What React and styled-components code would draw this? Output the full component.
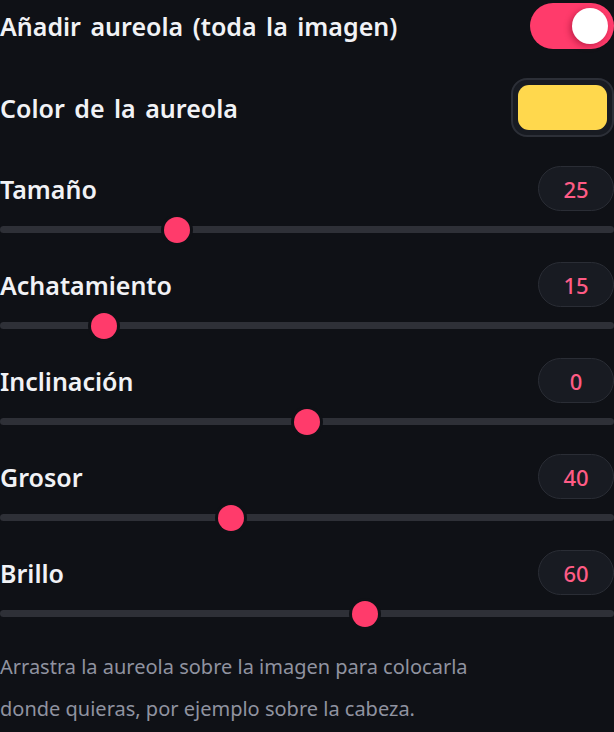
import React from 'react';
import styled, { createGlobalStyle } from 'styled-components';

const GlobalStyle = createGlobalStyle`
  html, body { margin: 0; padding: 0; background: #0f1116; }
  body { font-family: "Noto Sans", "Open Sans", sans-serif; }
`;

const Panel = styled.div`
  width: 614px;
  padding-top: 3px;
  display: flex;
  flex-direction: column;
  gap: 29px;
  color: #f1f2f5;
`;

const Row = styled.div`
  display: flex;
  align-items: center;
  justify-content: space-between;
`;

const Label = styled.span`
  font-size: 25px;
  font-weight: 600;
  word-spacing: 3px;
  line-height: 1.2;
`;

const Toggle = styled.div`
  width: 84px;
  height: 46px;
  border-radius: 23px;
  background: #ff3b6b;
  display: flex;
  align-items: center;
  justify-content: ${p => (p.$on ? 'flex-end' : 'flex-start')};
  padding: 0 6px;
  box-sizing: border-box;
`;

const Knob = styled.div`
  width: 36px;
  height: 36px;
  border-radius: 50%;
  background: #fff;
  box-shadow: -2px 2px 6px rgba(120, 0, 30, 0.45);
`;

const Swatch = styled.div`
  width: 103px;
  height: 59px;
  box-sizing: border-box;
  border: 2px solid #2c2f37;
  border-radius: 16px;
  background: #181b22;
  padding: 5px;
`;

const SwatchFill = styled.div`
  height: 100%;
  border-radius: 11px;
  background: ${p => p.$color};
`;

const Group = styled.div`
  display: flex;
  flex-direction: column;
  gap: 15px;
`;

const Pill = styled.div`
  min-width: 76px;
  height: 45px;
  box-sizing: border-box;
  border: 1.5px solid #2a2d35;
  border-radius: 23px;
  background: #181b22;
  color: #ff5b85;
  font-size: 22px;
  font-weight: 500;
  display: flex;
  align-items: center;
  justify-content: center;
`;

const Track = styled.div`
  position: relative;
  height: 7px;
  border-radius: 4px;
  background: #2e3037;
`;

const Thumb = styled.div`
  position: absolute;
  top: 50%;
  width: 26px;
  height: 26px;
  margin-left: -13px;
  margin-top: -13px;
  border-radius: 50%;
  background: #ff3b6b;
  box-shadow: 0 0 0 3px #0f1116;
`;

const Hint = styled.p`
  margin: 0;
  max-width: 520px;
  font-size: 20px;
  line-height: 42px;
  color: #9093a0;
`;

const sliders = [
  { label: 'Tamaño', value: 25, x: 177 },
  { label: 'Achatamiento', value: 15, x: 104 },
  { label: 'Inclinación', value: 0, x: 307 },
  { label: 'Grosor', value: 40, x: 231 },
  { label: 'Brillo', value: 60, x: 365 },
];

export default function App() {
  return (
    <>
      <GlobalStyle />
      <Panel>
        <Row>
          <Label>Añadir aureola (toda la imagen)</Label>
          <Toggle $on>
            <Knob />
          </Toggle>
        </Row>
        <Row>
          <Label>Color de la aureola</Label>
          <Swatch>
            <SwatchFill $color="#ffd84d" />
          </Swatch>
        </Row>
        {sliders.map(s => (
          <Group key={s.label}>
            <Row>
              <Label>{s.label}</Label>
              <Pill>{s.value}</Pill>
            </Row>
            <Track>
              <Thumb style={{ left: `${(s.x / 614) * 100}%` }} />
            </Track>
          </Group>
        ))}
        <Hint>
          Arrastra la aureola sobre la imagen para colocarla donde quieras, por ejemplo sobre la cabeza.
        </Hint>
      </Panel>
    </>
  );
}
